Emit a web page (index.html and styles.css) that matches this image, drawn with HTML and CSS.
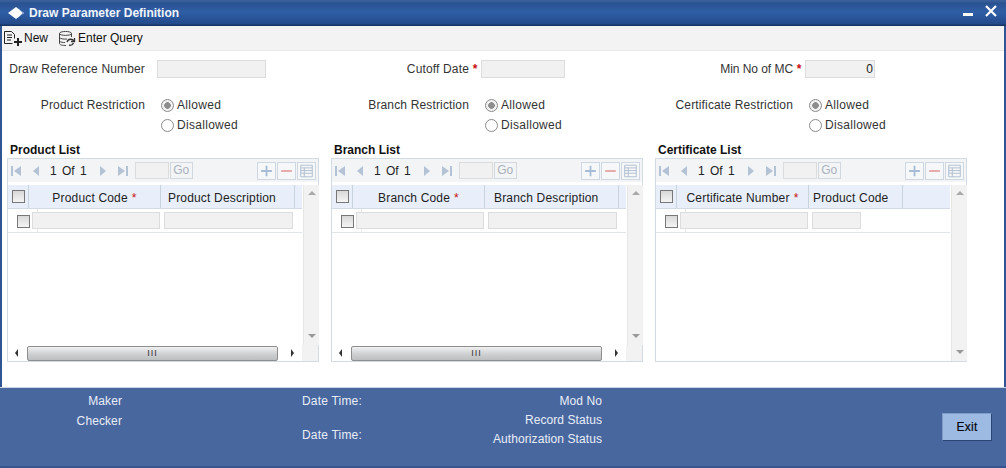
FILE: index.html
```html
<!DOCTYPE html>
<html lang="en">
<head>
<meta charset="utf-8">
<title>Draw Parameter Definition</title>
<link rel="stylesheet" href="styles.css">
</head>
<body>
<svg class="defs" width="0" height="0" aria-hidden="true">
  <symbol id="first" viewBox="0 0 12 12"><path d="M1 1h2v10H1zM11 1v10L4 6z"/></symbol>
  <symbol id="prev" viewBox="0 0 12 12"><path d="M9 1v10L3 6z"/></symbol>
  <symbol id="next" viewBox="0 0 12 12"><path d="M3 1v10l6-5z"/></symbol>
  <symbol id="last" viewBox="0 0 12 12"><path d="M9 1h2v10H9zM1 1v10l7-5z"/></symbol>
  <symbol id="plus" viewBox="0 0 18 18"><path d="M8 3h2v5h5v2h-5v5H8v-5H3V8h5z"/></symbol>
  <symbol id="minus" viewBox="0 0 18 18"><path d="M3 8h12v2H3z"/></symbol>
  <symbol id="list" viewBox="0 0 18 18"><path fill="none" stroke="currentColor" d="M2.500 2.500h13v13h-13zM2.500 5.500h13M2.500 8.500h13M2.500 11.500h13M6.500 5.500v10"/></symbol>
</svg>
<div class="window">
  <header class="titlebar">
    <div class="title-left">
      <svg class="diamond" width="18" height="14" viewBox="0 0 18 14"><path d="M9 1l8 6-8 6-8-6z" fill="#fff"/><path d="M12.500 3.600L16 7l-3.500 3.400" fill="none" stroke="#6f92c8" stroke-width=".8"/></svg>
      <span class="title-text">Draw Parameter Definition</span>
    </div>
    <div class="title-actions">
      <span class="win-min"></span>
      <svg class="win-close" width="12" height="12" viewBox="0 0 12 12"><path d="M1 1l10 10M11 1L1 11" stroke="#fff" stroke-width="2.200"/></svg>
    </div>
  </header>
  <nav class="toolbar">
    <span class="tool">
      <svg width="18" height="16" viewBox="0 0 18 16"><path d="M.5 13.500V1.500h7l3 3v4M3 5h5M3 7.500h5M3 10h4M.5 13.500h8" fill="none" stroke="#222"/><path d="M13 8h2v3h3v2h-3v3h-2v-3h-3v-2h3z" fill="#222"/></svg>
      New
    </span>
    <span class="tool">
      <svg width="18" height="17" viewBox="0 0 18 17"><path d="M1.500 3.500C1.500 .8 13.500 .8 13.500 3.500V7M1.500 3.500C1.500 6 13.500 6 13.500 3.500M1.500 3.500V13.500C1.500 15 5 15.500 8 15.500M1.500 7.500C2.500 9 6 9.300 9 9M1.500 11C2.500 12.300 5 12.600 7 12.500" fill="none" stroke="#444"/><path d="M9 12c1-3.500 5.500-3.500 7-1M16.500 8v3.500H13M15.500 13c-.8 1.800-2.800 2.600-4.500 2.200" fill="none" stroke="#333" stroke-width="1.300"/></svg>
      Enter Query
    </span>
  </nav>
  <main class="content">
    <section class="form-grid">
      <div class="field">
        <label class="field-label">Draw Reference Number</label>
        <span class="req-slot"></span>
        <span class="input input-ref"></span>
      </div>
      <div class="field">
        <label class="field-label">Cutoff Date</label>
        <span class="req-slot req">*</span>
        <span class="input input-date"></span>
      </div>
      <div class="field">
        <label class="field-label label-tight">Min No of MC</label>
        <span class="req-slot req">*</span>
        <span class="input input-min">0</span>
      </div>

      <div class="restriction">
        <span class="field-label">Product Restriction</span>
        <div class="radios">
          <span class="radio-row"><span class="radio on"></span>Allowed</span>
          <span class="radio-row"><span class="radio"></span>Disallowed</span>
        </div>
      </div>
      <div class="restriction">
        <span class="field-label">Branch Restriction</span>
        <div class="radios">
          <span class="radio-row"><span class="radio on"></span>Allowed</span>
          <span class="radio-row"><span class="radio"></span>Disallowed</span>
        </div>
      </div>
      <div class="restriction">
        <span class="field-label">Certificate Restriction</span>
        <div class="radios">
          <span class="radio-row"><span class="radio on"></span>Allowed</span>
          <span class="radio-row"><span class="radio"></span>Disallowed</span>
        </div>
      </div>
    </section>

    <section class="lists">
      <article class="list">
        <h2 class="list-title">Product List</h2>
        <div class="list-box">
          <div class="pager">
            <svg class="nav"><use href="#first"/></svg><svg class="nav"><use href="#prev"/></svg>
            <span class="pages">1 Of 1</span>
            <svg class="nav"><use href="#next"/></svg><svg class="nav"><use href="#last"/></svg>
            <span class="page-input"></span><span class="go">Go</span>
            <span class="pager-actions">
              <span class="act"><svg class="act-plus"><use href="#plus"/></svg></span>
              <span class="act"><svg class="act-minus"><use href="#minus"/></svg></span>
              <span class="act"><svg class="act-list"><use href="#list"/></svg></span>
            </span>
          </div>
          <div class="grid-area">
            <div class="table">
              <div class="thead">
                <span class="th th-check"><span class="check"></span></span>
                <span class="th th-a">Product Code<i class="req">*</i></span>
                <span class="th th-b th-left">Product Description</span>
              </div>
              <div class="trow">
                <span class="td-check"><span class="check"></span></span>
                <span class="cell cell-a"></span>
                <span class="cell cell-b"></span>
              </div>
            </div>
            <div class="vscroll"><span class="arrow-up"></span><span class="arrow-down"></span></div>
          </div>
          <div class="hscroll">
            <span class="arrow-left"></span>
            <span class="thumb"><span class="grip">III</span></span>
            <span class="arrow-right"></span>
            <span class="corner"></span>
          </div>
        </div>
      </article>

      <article class="list">
        <h2 class="list-title">Branch List</h2>
        <div class="list-box">
          <div class="pager">
            <svg class="nav"><use href="#first"/></svg><svg class="nav"><use href="#prev"/></svg>
            <span class="pages">1 Of 1</span>
            <svg class="nav"><use href="#next"/></svg><svg class="nav"><use href="#last"/></svg>
            <span class="page-input"></span><span class="go">Go</span>
            <span class="pager-actions">
              <span class="act"><svg class="act-plus"><use href="#plus"/></svg></span>
              <span class="act"><svg class="act-minus"><use href="#minus"/></svg></span>
              <span class="act"><svg class="act-list"><use href="#list"/></svg></span>
            </span>
          </div>
          <div class="grid-area">
            <div class="table">
              <div class="thead">
                <span class="th th-check"><span class="check"></span></span>
                <span class="th th-a">Branch Code<i class="req">*</i></span>
                <span class="th th-b th-left th-branch">Branch Description</span>
              </div>
              <div class="trow">
                <span class="td-check"><span class="check"></span></span>
                <span class="cell cell-a"></span>
                <span class="cell cell-b"></span>
              </div>
            </div>
            <div class="vscroll"><span class="arrow-up"></span><span class="arrow-down"></span></div>
          </div>
          <div class="hscroll">
            <span class="arrow-left"></span>
            <span class="thumb"><span class="grip">III</span></span>
            <span class="arrow-right"></span>
            <span class="corner"></span>
          </div>
        </div>
      </article>

      <article class="list">
        <h2 class="list-title">Certificate List</h2>
        <div class="list-box">
          <div class="pager">
            <svg class="nav"><use href="#first"/></svg><svg class="nav"><use href="#prev"/></svg>
            <span class="pages">1 Of 1</span>
            <svg class="nav"><use href="#next"/></svg><svg class="nav"><use href="#last"/></svg>
            <span class="page-input"></span><span class="go">Go</span>
            <span class="pager-actions">
              <span class="act"><svg class="act-plus"><use href="#plus"/></svg></span>
              <span class="act"><svg class="act-minus"><use href="#minus"/></svg></span>
              <span class="act"><svg class="act-list"><use href="#list"/></svg></span>
            </span>
          </div>
          <div class="grid-area">
            <div class="table">
              <div class="thead">
                <span class="th th-check"><span class="check"></span></span>
                <span class="th th-a">Certificate Number<i class="req">*</i></span>
                <span class="th th-c th-left">Product Code</span>
                <span class="th th-rest"></span>
              </div>
              <div class="trow">
                <span class="td-check"><span class="check"></span></span>
                <span class="cell cell-a"></span>
                <span class="cell cell-c"></span>
              </div>
            </div>
            <div class="vscroll"><span class="arrow-up"></span><span class="arrow-down"></span></div>
          </div>
        </div>
      </article>
    </section>
  </main>
  <footer class="footer">
    <div class="foot-col foot-who">
      <span>Maker</span>
      <span>Checker</span>
    </div>
    <div class="foot-col foot-date">
      <span>Date Time:</span>
      <span>Date Time:</span>
    </div>
    <div class="foot-col foot-status">
      <span>Mod No</span>
      <span>Record Status</span>
      <span>Authorization Status</span>
    </div>
    <button class="exit" type="button">Exit</button>
  </footer>
</div>
</body>
</html>
```

FILE: styles.css
```css
* { box-sizing: border-box; }
html, body { margin: 0; padding: 0; }
body {
  width: 1006px;
  height: 468px;
  overflow: hidden;
  font-family: "Liberation Sans", Arial, sans-serif;
  font-size: 12px;
  color: #222;
  background: #fff;
}
.defs { display: block; height: 0; }
.window {
  width: 1006px;
  height: 468px;
  display: flex;
  flex-direction: column;
  border-left: 2px solid #2f5592;
  border-right: 2px solid #2f5592;
  border-bottom: 2px solid #34558f;
}

.titlebar {
  height: 26px;
  flex: none;
  margin: 0 -2px;
  padding: 0 9px 0 7px;
  display: flex;
  justify-content: space-between;
  align-items: center;
  background: linear-gradient(#3a5f9b 0, #3a5f9b 1px, #2a5291 3px, #2f5ea6 12px, #234a8a 24px, #153463 25px, #153463 26px);
}
.title-left { display: flex; align-items: center; gap: 4px; }
.title-text { color: #f0f4fa; font-weight: bold; font-size: 12px; }
.title-actions { display: flex; align-items: center; gap: 12px; margin-bottom: 4px; }
.win-min { display: block; width: 10px; height: 3px; background: #fff; margin-top: 6px; }
.win-close { display: block; }

.toolbar {
  height: 25px;
  flex: none;
  padding-left: 2px;
  display: flex;
  align-items: center;
  gap: 10px;
  background: #f3f3f3;
  border-bottom: 1px solid #e8e8e8;
}
.tool { display: flex; align-items: center; gap: 2px; color: #111; }
.tool svg { display: block; }

.content { flex: 1; padding: 9px 0 0 6px; min-height: 0; }

.form-grid {
  display: grid;
  grid-template-columns: repeat(3, 324px);
  grid-auto-rows: min-content;
}
.field { display: flex; align-items: center; height: 18px; }
.field-label { width: 137px; flex: none; text-align: right; color: #333; white-space: nowrap; letter-spacing: .15px; }
.label-tight { letter-spacing: -.05px; }
.req-slot { width: 12px; flex: none; text-align: center; }
.req { color: #c81010; font-style: normal; font-weight: bold; }
.input {
  display: block;
  height: 18px;
  background: #f1f1f1;
  border: 1px solid #dcdcdc;
  color: #222;
}
.input-ref { width: 109px; }
.input-date { width: 84px; }
.input-min { width: 70px; text-align: right; padding-right: 1px; line-height: 16px; }

.restriction { display: flex; margin-top: 17px; height: 40px; }
.restriction .field-label { line-height: 20px; }
.radios { display: flex; flex-direction: column; margin-left: 16px; color: #333; letter-spacing: .3px; }
.radio-row { display: flex; align-items: center; height: 20px; }
.radio {
  display: block;
  width: 13px;
  height: 13px;
  margin-right: 3px;
  border: 1px solid #8a8a8a;
  border-radius: 50%;
  background: #fff;
}
.radio.on { background: radial-gradient(circle, #8d8d8d 0, #8d8d8d 3px, #f2f2f2 3.600px); }

.lists { display: flex; gap: 12px; margin-top: 8px; margin-left: -1px; }
.list { width: 312px; }
.list-title {
  margin: 0;
  padding-left: 3px;
  height: 15px;
  font-size: 12px;
  line-height: 14px;
  color: #111;
}
.list-box {
  height: 204px;
  display: flex;
  flex-direction: column;
  border: 1px solid #d2dbe3;
  border-top: 0;
}
.pager {
  height: 24px;
  flex: none;
  margin: 0 -1px;
  padding: 0 2px;
  display: flex;
  align-items: center;
  background: #f2f4f6;
  border: 1px solid #d2dbe3;
  border-bottom: 0;
}
.nav { display: block; width: 12px; height: 12px; flex: none; fill: #b4c2d6; margin-right: 8px; }
.pages { margin-right: 10px; color: #222; white-space: nowrap; word-spacing: 2px; }
.page-input {
  display: block;
  width: 34px;
  height: 17px;
  margin-left: -2px;
  background: #f1f1f1;
  border: 1px solid #dcdcdc;
}
.go {
  width: 23px;
  height: 17px;
  margin-left: 1px;
  text-align: center;
  line-height: 15px;
  color: #aab2bc;
  border: 1px solid #d2d8de;
}
.pager-actions { margin-left: auto; display: flex; gap: 1px; }
.act {
  display: block;
  width: 19px;
  height: 18px;
  border: 1px solid #cfd8e2;
  background: #f6f7f8;
}
.act svg { display: block; width: 17px; height: 16px; }
.act-plus { fill: #a6bbd6; }
.act-minus { fill: #e6a3a0; }
.act-list { color: #aabacd; }

.grid-area { flex: 1; min-height: 0; display: flex; padding-top: 3px; }
.table { width: 294px; flex: none; }
.thead {
  height: 24px;
  display: flex;
  background: #e8effa;
  border-bottom: 1px solid #d2dbe3;
}
.th {
  display: flex;
  align-items: center;
  justify-content: center;
  color: #222;
  border-right: 1px solid #c9d3de;
  white-space: nowrap;
  letter-spacing: .17px;
  padding-top: 2px;
}
.th-check { width: 21px; border-right-color: #c9d3de; padding-top: 0; }
.th-a { width: 132px; }
.th-b { width: 134px; }
.th-c { width: 94px; }
.th-rest { flex: 1; border-right: 0; }
.th-left { justify-content: flex-start; padding-left: 7px; }
.th-branch { padding-left: 9px; }
.th-c.th-left { padding-left: 4px; }
.th .req { margin-left: 4px; font-weight: normal; }
.check {
  display: block;
  width: 13px;
  height: 13px;
  border: 1px solid #777;
  background: linear-gradient(#d8d8d8, #f4f4f4);
}
.trow {
  height: 24px;
  display: flex;
  align-items: center;
  border-bottom: 1px solid #e0e5ea;
}
.td-check {
  width: 30px;
  flex: none;
  align-self: stretch;
  display: flex;
  align-items: center;
  padding: 2px 0 0 9px;
  margin-right: -6px;
  border-right: 1px solid #e6eaee;
}
.cell {
  display: block;
  height: 17px;
  background: #f1f1f1;
  border: 1px solid #dcdcdc;
}
.cell-a { width: 128px; }
.cell-b { width: 129px; margin-left: 4px; }
.cell-c { width: 49px; margin-left: 4px; }

.vscroll {
  width: 16px;
  margin-left: 1px;
  flex: none;
  display: flex;
  flex-direction: column;
  justify-content: space-between;
  align-items: center;
  padding: 6px 0 7px;
  background: #f2f2f2;
  border-left: 1px solid #e6e6e6;
}
.arrow-up { border: 4px solid transparent; border-top: 0; border-bottom: 4px solid #a8a8a8; }
.arrow-down { border: 4px solid transparent; border-bottom: 0; border-top: 4px solid #999; }

.hscroll {
  height: 16px;
  flex: none;
  display: flex;
  align-items: center;
}
.arrow-left { border: 4px solid transparent; border-left: 0; border-right: 3px solid #333; margin: 0 9px 0 7px; }
.arrow-right { border: 4px solid transparent; border-right: 0; border-left: 3px solid #333; margin-left: 13px; }
.thumb {
  width: 251px;
  height: 15px;
  flex: none;
  display: flex;
  align-items: center;
  justify-content: center;
  border: 1px solid #8e8e8e;
  border-radius: 2px;
  background: linear-gradient(#f0f0f0, #cfd0d2 55%, #bdbec0);
}
.grip { font-size: 9px; line-height: 10px; letter-spacing: 1px; color: #333; }
.corner { margin-left: auto; width: 16px; height: 16px; background: #f2f2f2; }

.footer {
  flex: none;
  height: 79px;
  margin: 0 -2px;
  padding: 6px 14px 0 0;
  display: flex;
  color: #e8eef8;
  background: #49679f;
  border-top: 1px solid #c9d4e4;
}
.foot-col { display: flex; flex-direction: column; }
.foot-who { width: 122px; align-items: flex-end; gap: 6px; letter-spacing: .1px; }
.foot-date { margin-left: 180px; gap: 20px; letter-spacing: .2px; }
.foot-status { width: 240px; align-items: flex-end; gap: 5px; letter-spacing: .08px; }
.exit {
  margin: 19px 0 0 auto;
  width: 50px;
  height: 28px;
  font: 12px "Liberation Sans", Arial, sans-serif;
  letter-spacing: .3px;
  color: #000;
  -webkit-text-stroke: .2px #0d1a33;
  background: #9dbae2;
  border: 1px solid #7f9cc6;
  border-right-color: #2b4674;
  border-bottom-color: #2b4674;
  padding: 0;
}
```
